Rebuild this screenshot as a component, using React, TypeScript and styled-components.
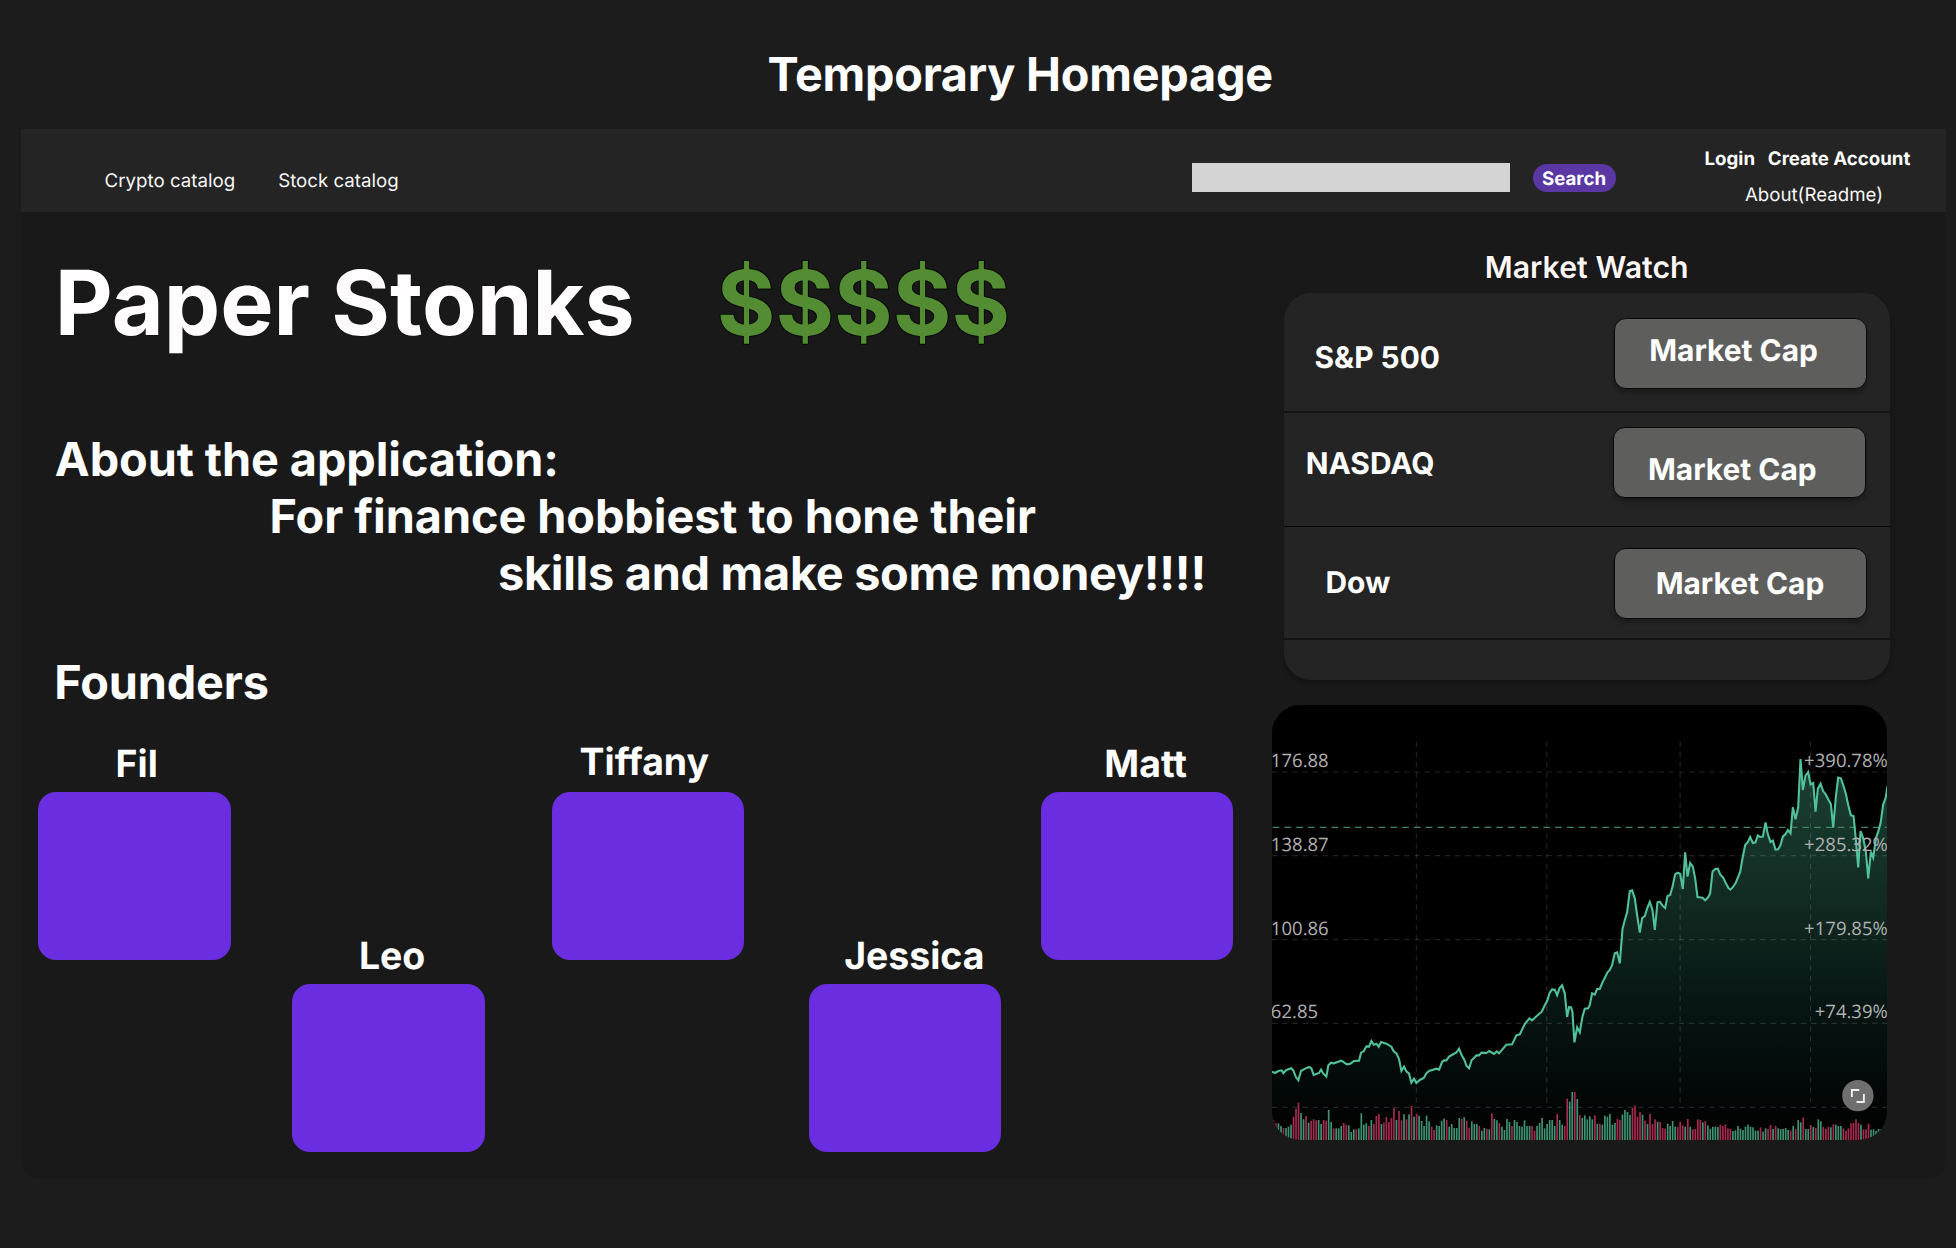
import React from 'react';
import styled, { createGlobalStyle } from 'styled-components';

const GlobalStyle = createGlobalStyle`
  *, *::before, *::after { box-sizing: border-box; }
  body {
    margin: 0;
    background: #1c1c1c;
    color: #fff;
    font-family: Inter, "Liberation Sans", sans-serif;
    text-rendering: geometricPrecision;
  }
  button { text-rendering: inherit; }
  h1, h2, h3, p { margin: 0; font-weight: 700; }
`;

const Page = styled.div`
  width: 1956px;
  height: 1248px;
  overflow: hidden;
  display: flex;
  flex-direction: column;
`;

const PageHeader = styled.header`
  height: 129px;
  padding: 47px 0 0 767.6px;
`;

const PageTitle = styled.h1`
  font-size: 46.8px;
  line-height: 56px;
  letter-spacing: -0.25px;
  white-space: nowrap;
`;

const Board = styled.div`
  width: 1925px;
  height: 1050px;
  margin-left: 21px;
  background: #191919;
  border-radius: 0 0 19px 19px;
`;

const NavBar = styled.nav`
  display: flex;
  align-items: flex-start;
  height: 83px;
  padding-left: 83.6px;
  background: #242424;
`;

const CatalogLinks = styled.div`
  display: flex;
  gap: 43px;
  width: 1087.8px;
  padding-top: 40px;
`;

const NavLink = styled.a<{ $strong?: boolean }>`
  font-size: 18.7px;
  font-weight: ${(p) => (p.$strong ? 700 : 400)};
  line-height: 23px;
  color: ${(p) => (p.$strong ? '#fff' : '#f7f7f7')};
  white-space: nowrap;
`;

const SearchInput = styled.input`
  width: 317.5px;
  height: 29px;
  margin-top: 34px;
  padding: 0 8px;
  border: 0;
  border-radius: 0;
  background: #d4d4d4;
`;

const SearchButton = styled.button`
  width: 83.6px;
  height: 28px;
  margin: 35px 0 0 23px;
  padding: 3px 0 2px 9px;
  border: 0;
  border-radius: 14px;
  background: #5a37a3;
  color: #fff;
  font: 700 18.7px/23px Inter, "Liberation Sans", sans-serif;
  text-align: left;
`;

const AccountArea = styled.div`
  display: flex;
  flex-direction: column;
  gap: 13px;
  margin-left: 88px;
  padding-top: 18px;
`;

const AccountRow = styled.div<{ $indent?: number }>`
  display: flex;
  gap: 12.8px;
  height: 23px;
  padding-left: ${(p) => p.$indent ?? 0}px;
`;

const Content = styled.main`
  display: grid;
  grid-template-columns: 1251.2px 1fr;
`;

const Intro = styled.section`
  display: flex;
  flex-direction: column;
  padding-top: 36px;
`;

const Hero = styled.div`
  display: flex;
  gap: 82px;
  padding-left: 33.8px;
  height: 109px;
  font-size: 89.6px;
  line-height: 109px;
  white-space: nowrap;
`;

const Brand = styled.h1`
  font-size: inherit;
  color: #fffdfe;
  -webkit-text-stroke: 1px #0d0d0d;
  paint-order: stroke fill;
`;

const Dollars = styled.span`
  font-weight: 700;
  color: #548c33;
  -webkit-text-stroke: 2px #060a04;
  paint-order: stroke fill;
`;

const About = styled.div`
  margin-top: 75.4px;
  padding-left: 33.8px;
`;

const AboutLine = styled.p<{ $indent?: number; $tracking?: number }>`
  padding-left: ${(p) => p.$indent ?? 0}px;
  font-size: 46.8px;
  line-height: 56.7px;
  letter-spacing: ${(p) => p.$tracking ?? 0}px;
  white-space: nowrap;
`;

const SectionTitle = styled.h2`
  margin: 52.4px 0 29.2px 33.2px;
  font-size: 46.8px;
  line-height: 56px;
  letter-spacing: -0.15px;
`;

const FounderRow = styled.div`
  display: flex;
  align-items: flex-start;
  padding-left: 17.4px;
`;

const FounderCard = styled.article<{ $gap: number; $drop?: boolean }>`
  width: 192.3px;
  margin: ${(p) => (p.$drop ? 192.4 : 0)}px 0 0 ${(p) => p.$gap}px;
`;

const FounderName = styled.h3<{ $indent: number; $top: number }>`
  height: 52px;
  padding: ${(p) => p.$top}px 0 0 ${(p) => p.$indent}px;
  font-size: 37.4px;
  line-height: 45px;
  white-space: nowrap;
`;

const FounderPhoto = styled.div`
  height: 168px;
  border-radius: 18px;
  background: #6a2ee0;
`;

const Markets = styled.aside`
  display: flex;
  flex-direction: column;
  padding-top: 38px;
`;

const WatchTitle = styled.h2`
  height: 43px;
  padding-left: 212.6px;
  font-size: 30.3px;
  font-weight: 600;
  line-height: 36px;
  color: #fff6f6;
  -webkit-text-stroke: 1px #0a0a0a;
  paint-order: stroke fill;
`;

const WatchPanel = styled.div`
  width: 605.2px;
  height: 387.3px;
  margin-left: 12.3px;
  border-radius: 27px;
  background: #242424;
  box-shadow: 0 4px 4px rgba(0, 0, 0, 0.25);
`;

const WatchRow = styled.div<{ $height: number; $line: string }>`
  display: flex;
  align-items: flex-start;
  justify-content: space-between;
  height: ${(p) => p.$height}px;
  border-bottom: ${(p) => p.$line};
`;

const IndexName = styled.span<{ $indent: number; $top: number }>`
  padding: ${(p) => p.$top}px 0 0 ${(p) => p.$indent}px;
  font-size: 29.9px;
  font-weight: 700;
  line-height: 36px;
`;

const CapButton = styled.button<{ $top: number; $right: number; $padTop: number; $padLeft: number }>`
  width: 253px;
  height: 71.4px;
  margin: ${(p) => p.$top}px ${(p) => p.$right}px 0 0;
  padding: ${(p) => p.$padTop}px 0 0 ${(p) => p.$padLeft}px;
  display: flex;
  align-items: flex-start;
  border: 1px solid #080808;
  border-radius: 12px;
  background: #5e5e5c;
  box-shadow: 0 4px 4px rgba(0, 0, 0, 0.25);
  color: #fff;
  font: 700 29.9px/36px Inter, "Liberation Sans", sans-serif;
`;

const ChartCard = styled.div`
  width: 614.9px;
  height: 435px;
  margin-top: 24.5px;
  border-radius: 28px;
  background: #000;
  overflow: hidden;
`;

const ChartSvg = styled.svg`
  display: block;
  width: 100%;
  height: 100%;
`;

const AxisLabel = styled.text`
  font: 400 55.6px "Open Sans", "Noto Sans", sans-serif;
  fill: #b0b0b0;
`;

type Founder = { name: string; gap: number; indent: number; top: number; drop?: boolean };

const founders: Founder[] = [
  { name: 'Fil', gap: 0, indent: 77.2, top: 1.5 },
  { name: 'Leo', gap: 61.8, indent: 66.4, top: 2, drop: true },
  { name: 'Tiffany', gap: 67, indent: 27.8, top: 0 },
  { name: 'Jessica', gap: 64.5, indent: 35.6, top: 2, drop: true },
  { name: 'Matt', gap: 39.9, indent: 63.6, top: 1.5 },
];

const indices = [
  { name: 'S&P 500', height: 120, line: '2px solid #131313', indent: 30, top: 46.5, btnTop: 25, btnRight: 22.6, padTop: 14, padLeft: 34.2 },
  { name: 'NASDAQ', height: 114, line: '1px solid #060606', indent: 21.2, top: 33, btnTop: 14, btnRight: 23.6, padTop: 24, padLeft: 33.9 },
  { name: 'Dow', height: 113, line: '2px solid #131313', indent: 41, top: 38, btnTop: 21, btnRight: 22.6, padTop: 17, padLeft: 40.6 },
];

/* Price series in chart units: 3 units per pixel, 1844 x 1305. */
const price =
  '0,1100 9,1104 19,1098 29,1096 34,1104 43,1095 58,1090 64,1097 72,1117 79,1126 87,1098 95,1093 111,1086 118,1090 125,1110 141,1104 147,1094 154,1106 163,1115 169,1081 177,1073 185,1075 208,1067 217,1073 225,1078 235,1076 246,1068 261,1067 267,1043 275,1039 283,1024 291,1025 298,1008 305,1019 313,1016 320,1025 327,1011 343,1016 358,1025 365,1039 373,1045 381,1062 388,1098 396,1085 403,1099 411,1106 418,1133 426,1121 433,1134 443,1125 455,1119 463,1105 471,1098 493,1091 501,1094 510,1071 516,1066 523,1066 531,1055 553,1042 561,1031 569,1051 577,1065 583,1082 591,1090 599,1065 605,1060 613,1051 621,1051 628,1043 643,1044 651,1038 666,1047 674,1039 681,1045 691,1033 703,1019 720,1018 733,991 743,988 758,957 772,940 780,946 793,934 809,920 818,901 825,888 833,863 840,853 848,854 855,871 862,850 870,841 878,865 885,936 891,906 897,907 901,920 907,1012 915,967 923,982 931,935 938,911 948,910 953,900 960,865 968,869 975,852 983,852 991,832 998,819 1006,802 1013,795 1020,780 1028,745 1035,742 1043,775 1051,673 1058,645 1065,622 1073,558 1080,556 1088,580 1095,630 1103,683 1110,639 1118,633 1125,610 1133,591 1141,615 1148,675 1156,592 1163,590 1171,602 1179,609 1186,573 1194,570 1201,545 1209,508 1216,503 1224,506 1232,552 1239,442 1246,515 1254,474 1262,485 1269,520 1276,576 1291,578 1299,586 1308,577 1314,565 1321,500 1329,492 1337,491 1344,508 1353,518 1361,535 1369,549 1375,554 1383,545 1390,535 1397,518 1404,501 1411,460 1419,420 1427,411 1434,396 1442,414 1450,412 1457,391 1464,396 1472,395 1480,352 1487,388 1495,411 1502,407 1510,434 1518,433 1525,420 1532,395 1540,387 1547,375 1555,385 1562,307 1570,343 1578,307 1585,162 1592,255 1600,212 1608,201 1615,238 1623,234 1630,320 1637,251 1645,236 1653,259 1661,269 1668,283 1676,297 1683,368 1691,275 1698,218 1706,220 1713,240 1721,267 1728,300 1736,331 1744,333 1751,405 1758,487 1765,378 1773,400 1781,440 1788,520 1796,440 1803,458 1811,400 1818,380 1825,355 1833,298 1840,280 1846,243';

/* Volume bars: height in chart units followed by u (up) or d (down). */
const volume = (
  '60d 50d 50u 42u 36d 36u 40u 46u 70d 94d 112d 81u 62u 72d 52u 57d 62d 59d 60u 48u 60d 58d 90u 54u 35d 35u 35u 42u 51d 46d 44u 24u 32u 32d 35u 80u 46u 50u 42d 60u 48d 72d 78d 48u 52d 69d 54d 66d 97d 60u 87d 59d 77u 62d 77u 102d 70u 79d 73u 57u 42u 73u 56u 40d 30d 44u 42u 58u 64u 60d 40u 48u 36u 36u 66u 63d 68u 57d 37d 56u 48u 48u 42d 28u 36u 33d 32u 80d 63u 59u 51d 40u 30u 63u 54u 42d 60u 54u 42u 40u 59u 42u 42u 42d 28d 42u 51u 66u 35u 48u 60u 60u 42u 78d 60u 46u 42d 124d 115u 144u 144d 123u ' +
  '75d 66u 74u 62u 71u 62u 74d 48u 48d 46u 73u 70u 78u 46u 51u 64d 60d 76u 90u 84u 75u 96d 104d 70d 84d 76u 58d 48u 79d 48d 62d 55u 54d 36d 34d 49u 42u 57u 40u 40d 55d 44d 40u 63d 40u 32d 33d 62d 60d 53u 57d 44u 34u 40u 40u 39u 46d 42d 47d 35d 33d 27u 29u 42u 34u 30u 40u 46u 40u 38u 28u 28u 38d 25u 35u 33d 45d 33u 42d 35u 33u 33u 36u 30u 28d 42u 33d 60u 53u 68d 33u 33u 45d 39u 36d 62u 56u 39d 34d 39d 38u 47d 46u 42u 42u 35d 28d 35d 50d 51d 62d 51d 46u 32d 32d 49d 31u 32u 27u 33u 33u 40u'
).split(' ');

const priceLevels = [
  { y: 201, left: '176.88', right: '+390.78%' },
  { y: 452, left: '138.87', right: '+285.32%' },
  { y: 704, left: '100.86', right: '+179.85%' },
  { y: 955, left: '62.85', right: '+74.39%' },
];

function StockChart() {
  return (
    <ChartCard>
      <ChartSvg viewBox="0 0 1844 1305" preserveAspectRatio="none">
        <defs>
          <linearGradient id="area" gradientUnits="userSpaceOnUse" x1="0" y1="160" x2="0" y2="1305">
            <stop offset="0" stopColor="#4fbe96" stopOpacity="0.34" />
            <stop offset="0.3" stopColor="#4fbe96" stopOpacity="0.25" />
            <stop offset="0.5" stopColor="#45b090" stopOpacity="0.185" />
            <stop offset="0.7" stopColor="#2fa090" stopOpacity="0.115" />
            <stop offset="0.91" stopColor="#2fa090" stopOpacity="0.035" />
            <stop offset="1" stopColor="#2fa090" stopOpacity="0" />
          </linearGradient>
        </defs>
        <polygon points={`0,1305 ${price} 1846,1305`} fill="url(#area)" />
        <g stroke="#fff" strokeOpacity="0.13" strokeWidth="3.5" strokeDasharray="16 14.5">
          {[201, 452, 704, 955, 1207].map((y) => (
            <line key={y} x1="0" x2="1844" y1={y} y2={y} />
          ))}
          {[433, 824, 1224, 1615].map((x) => (
            <line key={x} x1={x} x2={x} y1="110" y2="1207" />
          ))}
        </g>
        <line x1="2" x2="1844" y1="367" y2="367" stroke="#418468" strokeWidth="3.6" strokeDasharray="20 15.3" />
        {volume.map((bar, i) => {
          const h = parseInt(bar, 10);
          return (
            <rect
              key={i}
              x={1.8 + i * 7.53}
              y={1305 - h}
              width="5"
              height={h}
              fill={bar.endsWith('u') ? '#3f9474' : '#a82a4e'}
            />
          );
        })}
        <polyline points={price} fill="none" stroke="#50c19a" strokeWidth="6.3" strokeLinejoin="miter" />
        {priceLevels.map((l) => (
          <g key={l.y}>
            <AxisLabel x="-3.5" y={l.y - 15}>{l.left}</AxisLabel>
            <AxisLabel x="1847" y={l.y - 15} textAnchor="end">{l.right}</AxisLabel>
          </g>
        ))}
        <circle cx="1757" cy="1172" r="47" fill="#6f6f6f" />
        <path d="M1739 1176V1155H1761M1775 1167V1191H1753" fill="none" stroke="#f0f0f0" strokeWidth="5.5" />
      </ChartSvg>
    </ChartCard>
  );
}

export default function App() {
  return (
    <Page>
      <GlobalStyle />
      <PageHeader>
        <PageTitle>Temporary Homepage</PageTitle>
      </PageHeader>
      <Board>
        <NavBar>
          <CatalogLinks>
            <NavLink>Crypto catalog</NavLink>
            <NavLink>Stock catalog</NavLink>
          </CatalogLinks>
          <SearchInput aria-label="Search" />
          <SearchButton>Search</SearchButton>
          <AccountArea>
            <AccountRow>
              <NavLink $strong>Login</NavLink>
              <NavLink $strong>Create Account</NavLink>
            </AccountRow>
            <AccountRow $indent={40.4}>
              <NavLink>About(Readme)</NavLink>
            </AccountRow>
          </AccountArea>
        </NavBar>
        <Content>
          <Intro>
            <Hero>
              <Brand>Paper Stonks</Brand>
              <Dollars>$$$$$</Dollars>
            </Hero>
            <About>
              <AboutLine $tracking={-0.08}>About the application:</AboutLine>
              <AboutLine $indent={214.7} $tracking={-0.07}>For finance hobbiest to hone their</AboutLine>
              <AboutLine $indent={443.2} $tracking={-0.27}>skills and make some money!!!!</AboutLine>
            </About>
            <SectionTitle>Founders</SectionTitle>
            <FounderRow>
              {founders.map((f) => (
                <FounderCard key={f.name} $gap={f.gap} $drop={f.drop}>
                  <FounderName $indent={f.indent} $top={f.top}>{f.name}</FounderName>
                  <FounderPhoto />
                </FounderCard>
              ))}
            </FounderRow>
          </Intro>
          <Markets>
            <WatchTitle>Market Watch</WatchTitle>
            <WatchPanel>
              {indices.map((m) => (
                <WatchRow key={m.name} $height={m.height} $line={m.line}>
                  <IndexName $indent={m.indent} $top={m.top}>{m.name}</IndexName>
                  <CapButton $top={m.btnTop} $right={m.btnRight} $padTop={m.padTop} $padLeft={m.padLeft}>
                    Market Cap
                  </CapButton>
                </WatchRow>
              ))}
            </WatchPanel>
            <StockChart />
          </Markets>
        </Content>
      </Board>
    </Page>
  );
}
